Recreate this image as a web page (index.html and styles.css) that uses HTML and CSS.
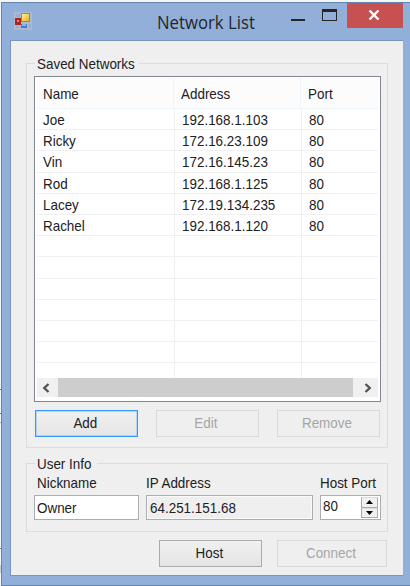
FILE: index.html
```html
<!DOCTYPE html>
<html lang="en">
<head>
<meta charset="utf-8">
<title>Network List</title>
<link rel="stylesheet" href="styles.css">
</head>
<body>
<div class="window">
  <header class="titlebar">
    <svg class="app-icon" width="18" height="18" viewBox="0 0 18 18">
      <defs><linearGradient id="gold" x2="1" y2="1"><stop stop-color="#fff0a0"/><stop offset="1" stop-color="#e8b020"/></linearGradient></defs>
      <path fill="#aeb9c8" d="M0 0h18v18H0z"/>
      <path fill="#91afd8" d="M2 2h4v3H2zM2 14h3v2H2zM15 12h2v4h-2z"/>
      <path fill="#a92520" d="M1 6h6v7H1z"/><path fill="#e98078" d="M3 8h2v2H3z"/>
      <path fill="#b88912" d="M7 1h9v9H7z"/><path fill="url(#gold)" d="M8 2h7v7H8z"/>
      <path fill="#427bd5" d="M7 12h6v4H7z"/><path fill="#83b4f8" d="M8 12h4v2H8z"/>
    </svg>
    <h1 class="title"><span>Network List</span></h1>
    <div class="controls">
      <svg width="46" height="20" viewBox="0 0 46 20"><path fill="#262626" d="M0 16h14v2H0zM31 6h15v12H31z"/><path fill="#91afd8" d="M32 9h13v8H32z"/></svg>
      <button class="close" aria-label="Close"><svg width="12" height="10" viewBox="0 0 12 10"><path d="M1.5 .5l9 9M10.5 .5l-9 9" stroke="#fff" stroke-width="2.3"/></svg></button>
    </div>
  </header>
  <main class="client">
    <section class="group saved">
      <h2 class="legend"><span class="t">Saved Networks</span></h2>
      <div class="list">
        <div class="row head"><div><span class="t">Name</span></div><div><span class="t">Address</span></div><div><span class="t">Port</span></div></div>
        <div class="rows">
          <div class="row"><div><span class="t">Joe</span></div><div><span class="t">192.168.1.103</span></div><div><span class="t">80</span></div></div>
          <div class="row"><div><span class="t">Ricky</span></div><div><span class="t">172.16.23.109</span></div><div><span class="t">80</span></div></div>
          <div class="row"><div><span class="t">Vin</span></div><div><span class="t">172.16.145.23</span></div><div><span class="t">80</span></div></div>
          <div class="row"><div><span class="t">Rod</span></div><div><span class="t">192.168.1.125</span></div><div><span class="t">80</span></div></div>
          <div class="row"><div><span class="t">Lacey</span></div><div><span class="t">172.19.134.235</span></div><div><span class="t">80</span></div></div>
          <div class="row"><div><span class="t">Rachel</span></div><div><span class="t">192.168.1.120</span></div><div><span class="t">80</span></div></div>
          <div class="row"><div></div><div></div><div></div></div>
          <div class="row"><div></div><div></div><div></div></div>
          <div class="row"><div></div><div></div><div></div></div>
          <div class="row"><div></div><div></div><div></div></div>
          <div class="row"><div></div><div></div><div></div></div>
          <div class="row"><div></div><div></div><div></div></div>
          <div class="row"><div></div><div></div><div></div></div>
        </div>
        <div class="scrollbar">
          <svg width="8" height="10" viewBox="0 0 8 10"><path d="M6.5 1L2.3 5l4.2 4" fill="none" stroke="#555" stroke-width="2.4"/></svg>
          <div class="thumb"></div>
          <svg width="8" height="10" viewBox="0 0 8 10"><path d="M1.5 1l4.2 4-4.2 4" fill="none" stroke="#555" stroke-width="2.4"/></svg>
        </div>
      </div>
      <div class="actions">
        <button class="btn default"><span class="t">Add</span></button>
        <button class="btn" disabled><span class="t">Edit</span></button>
        <button class="btn" disabled><span class="t">Remove</span></button>
      </div>
    </section>
    <section class="group user">
      <h2 class="legend"><span class="t">User Info</span></h2>
      <div class="fields">
        <div class="field"><div class="label"><span class="t">Nickname</span></div><div class="input"><span class="t">Owner</span></div></div>
        <div class="field"><div class="label ip"><span class="t">IP Address</span></div><div class="input readonly"><span class="t">64.251.151.68</span></div></div>
        <div class="field"><div class="label ip"><span class="t">Host Port</span></div><div class="input port"><span class="t">80</span>
          <div class="spinner"><i><svg width="7" height="4"><path d="M0 4l3.5-4L7 4z"/></svg></i><i><svg width="7" height="4"><path d="M0 0h7L3.5 4z"/></svg></i></div></div></div>
      </div>
    </section>
    <div class="footer">
      <button class="btn host"><span class="t">Host</span></button>
      <button class="btn connect" disabled><span class="t">Connect</span></button>
    </div>
  </main>
</div>
</body>
</html>
```
FILE: styles.css
```css
* { box-sizing: border-box; }
body {
  margin: 0; width: 410px; height: 586px; overflow: hidden;
  padding: 2px 0 0 1px;
  background:
    linear-gradient(#777, #777) 0 389px / 1px 1px no-repeat,
    linear-gradient(#777, #777) 0 413px / 1px 1px no-repeat,
    linear-gradient(#aaa, #aaa) 0 422px / 1px 1px no-repeat,
    linear-gradient(#777, #777) 0 548px / 1px 1px no-repeat,
    linear-gradient(#ccc, #ccc) 0 565px / 1px 8px no-repeat,
    #f4f5f6;
  font: 15px/18px "Liberation Sans", Arial, sans-serif; color: #202024;
}
h1, h2 { margin: 0; font-size: inherit; font-weight: normal; }
svg { display: block; }
.t { display: inline-block; white-space: nowrap; transform: scaleX(.895); transform-origin: 0 50%; }
.window {
  width: 409px; height: 584px; background: #91afd8;
  border: 1px solid #6384af; border-right: 0; padding-right: 7px; padding-left: 8px;
}
.titlebar { display: flex; height: 37px; align-items: flex-start; padding-left: 4px; }
.app-icon { margin-top: 9px; }
.title { flex: 1; font: 18px/24px "Open Sans", "Noto Sans", sans-serif; color: #262626; padding: 7px 0 0 125px; }
.title span { display: inline-block; white-space: nowrap; transform: scaleX(.93); transform-origin: 0 50%; }
.controls { display: flex; gap: 10px; }
.close { width: 56px; height: 25px; border: 0; padding: 0 2px 2px 0; background: #c75050; display: grid; place-items: center; }
.client {
  height: 536px; border: 1px solid #7896c0; border-right: 0;
  background: #efefef; padding: 22px 15px 0 15px;
}
.group { border: 1px solid #dcdcdc; width: 362px; }
.legend { width: max-content; margin: -9px 0 0 8px; padding-left: 2px; background: #efefef; height: 18px; }
.saved { height: 385px; }
.saved .legend { width: 104px; }
.list {
  width: 347px; height: 326px; margin: 3px 0 0 7px;
  border: 1px solid #828790; background: #fff; padding: 1px 2px 0; overflow: hidden;
}
.row { display: grid; grid-template-columns: 138px 127px 1fr; height: 21.2px; border-bottom: 1px solid #f0f0f0; }
.row > div { border-right: 1px solid #f0f0f0; padding: 2px 0 0 7px; }
.row > div:first-child { padding-left: 6px; }
.row > div:last-child { border-right: 0; }
.row.head { height: 31px; background: #fcfcfc; border-color: #edf4fa; grid-template-columns: 137px 127px 1fr; }
.head > div { padding-top: 7px; border-color: #edf4fa; }
.rows { height: 269px; overflow: hidden; }
.scrollbar { height: 19px; background: #f0f0f0; display: flex; align-items: center; gap: 8px; padding: 0 6px 0 5px; }
.scrollbar .thumb { flex: 1; align-self: stretch; background: #cdcdcd; margin-right: 3px; }
.actions { display: flex; justify-content: space-between; width: 345px; margin: 8px 0 0 8px; }
.btn {
  width: 103px; height: 27px; padding: 0 3px 2px 0; font: inherit; color: #202024;
  border: 1px solid #acacac; background: linear-gradient(#f0f0f0, #e5e5e5);
}
.btn .t { transform-origin: 50% 50%; }
.btn:disabled { color: #a5a5a5; background: #efefef; border-color: #d9d9d9; }
.btn.default { border: 1px solid #3399ff; box-shadow: inset 0 0 0 .5px #7dbdff; }
.user { height: 69px; margin-top: 15px; }
.user .legend { width: 62px; }
.fields { display: flex; gap: 7px; margin: 1px 0 0 7px; }
.field:first-child { width: 105px; }
.field:nth-child(2) { width: 167px; }
.field:nth-child(3) { width: 61px; }
.label { height: 21px; padding-left: 3px; }
.label.ip { padding-left: 0; }
.input { height: 25px; border: 1px solid #abadb3; background: #fff; padding: 3px 0 0 2px; }
.input.readonly { background: #efefef; box-shadow: inset 0 0 0 1px #fafafa; padding-left: 3px; }
.input.port { display: flex; justify-content: space-between; padding: 1px 2px 1px 2px; }
.spinner { width: 17px; display: flex; flex-direction: column; }
.spinner i { flex: 1; display: grid; place-items: center; background: #f0f0f0; border: 1px solid #aaa; border-top-color: #ddd; }
.footer { display: flex; gap: 15px; margin: 8px 0 0 133px; }
.connect { width: 110px; }
```
